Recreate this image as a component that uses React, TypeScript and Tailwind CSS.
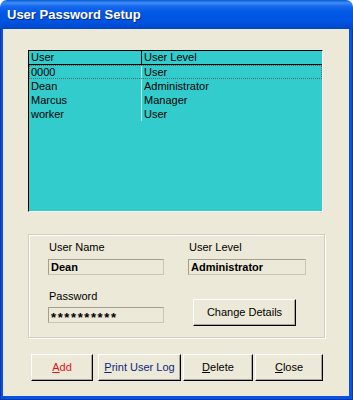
import React from 'react';

const users = [
  { name: '0000', level: 'User' },
  { name: 'Dean', level: 'Administrator' },
  { name: 'Marcus', level: 'Manager' },
  { name: 'worker', level: 'User' },
];

const font = "font-['Liberation_Sans',Arial,sans-serif]";

// classic raised button
const XpButton: React.FC<{ className?: string; children: React.ReactNode }> = ({ className = '', children }) => (
  <button
    className={`h-[27px] flex items-center justify-center bg-[#ECE9D8] border border-t-white border-l-white border-r-black border-b-black shadow-[inset_-1px_-1px_0_#ACA899] text-[11px] ${className}`}
  >
    {children}
  </button>
);

const Field: React.FC<{ value: string; className?: string; textClass?: string }> = ({ value, className = '', textClass = '' }) => (
  <div
    className={`h-[16px] flex items-center px-[2px] border border-t-[#A29F90] border-l-[#A29F90] border-r-[#C9C6B6] border-b-[#C9C6B6] text-[11px] font-bold text-black leading-none ${className}`}
  >
    <span className={textClass}>{value}</span>
  </div>
);

const App: React.FC = () => {
  return (
    <div className={`w-[353px] h-[400px] flex flex-col bg-white ${font}`}>
      {/* Title bar */}
      <div className="h-[29px] shrink-0 flex items-center pl-[7px] rounded-t-[7px] bg-[linear-gradient(to_bottom,#0A5BD6_0%,#3D8EF7_10%,#1767EC_22%,#0058E6_45%,#0054E0_75%,#0046CA_100%)]">
        <span className="text-white font-bold text-[13px] [text-shadow:1px_1px_0_#0C2A86]">User Password Setup</span>
      </div>

      {/* Frame */}
      <div className="flex-1 flex flex-col pl-[3px] pr-[4px] pb-[4px] bg-[#0553E0] shadow-[inset_1px_0_0_#0736A8,inset_-1px_-1px_0_#0736A8]">
        <div className="flex-1 flex flex-col bg-[#ECE9D8]">
          {/* List */}
          <div className="ml-[25px] mt-[21px] w-[295px] h-[162px] bg-[#33CCCC] border border-t-black border-l-black border-r-white border-b-white text-[11px] text-black">
            <div className="flex h-[14px] border-b border-black leading-[13px]">
              <div className="w-[113px] pl-[2px] border-r border-black">User</div>
              <div className="flex-1 pl-[2px]">User Level</div>
            </div>
            {users.map((u, i) => (
              <div
                key={u.name}
                className={`flex h-[14px] leading-[14px] ${i === 0 ? 'outline outline-1 outline-dotted outline-[#4E6E6E] -outline-offset-1' : ''}`}
              >
                <div className="w-[113px] pl-[2px] border-r border-[#B9E4E4]">{u.name}</div>
                <div className="flex-1 pl-[2px]">{u.level}</div>
              </div>
            ))}
          </div>

          {/* Details group */}
          <div className="ml-[25px] mt-[22px] w-[297px] h-[104px] border border-[#D0CEBF] shadow-[inset_1px_1px_0_#fff,1px_1px_0_#fff] flex pl-[19px] pt-[6px] text-[11px] text-black">
            <div className="w-[116px] flex flex-col">
              <div className="h-[13px] leading-[13px] pl-[1px]">User Name</div>
              <Field value="Dean" className="mt-[5px]" />
              <div className="h-[13px] leading-[13px] pl-[1px] mt-[15px]">Password</div>
              <Field value="**********" className="mt-[4px]" textClass="text-[13px] tracking-[1.6px] translate-y-[2px]" />
            </div>
            <div className="w-[118px] ml-[24px] flex flex-col">
              <div className="h-[13px] leading-[13px] pl-[1px]">User Level</div>
              <Field value="Administrator" className="mt-[5px]" />
              <XpButton className="mt-[24px] ml-[5px] w-[103px] text-black">Change Details</XpButton>
            </div>
          </div>

          {/* Buttons */}
          <div className="flex mt-[16px] ml-[28px]">
            <XpButton className="w-[62px] text-[#E3131B]">
              <span><u>A</u>dd</span>
            </XpButton>
            <XpButton className="w-[83px] ml-[5px] text-[#0D1F7C]">
              <span><u>P</u>rint User Log</span>
            </XpButton>
            <XpButton className="w-[70px] ml-[2px] text-black">
              <span><u>D</u>elete</span>
            </XpButton>
            <XpButton className="w-[68px] ml-[2px] text-black">
              <span><u>C</u>lose</span>
            </XpButton>
          </div>
        </div>
      </div>
    </div>
  );
};

export default App;
